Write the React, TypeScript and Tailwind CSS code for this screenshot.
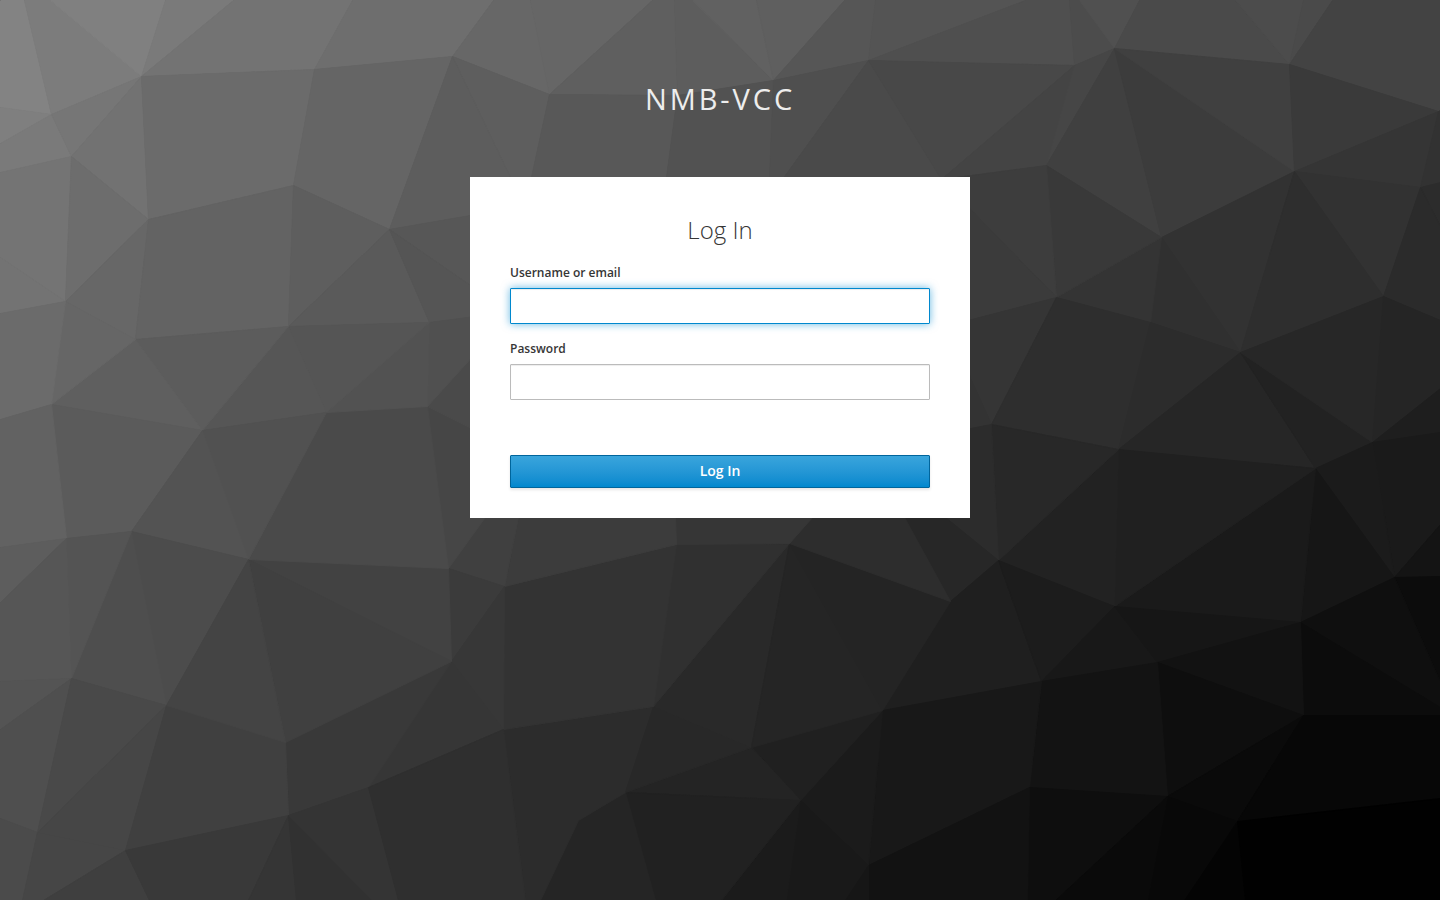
import type { FormEvent } from "react";

/* Low-poly backdrop: each entry is a fill followed by the corners of one facet. */
const facets: [string, string][] = [
  ["#838383", "0,0 24,0 51,114 0,107"],
  ["#7c7c7c", "24,0 50,0 141,76 51,114"],
  ["#808080", "50,0 165,0 141,76"],
  ["#7a7a7a", "165,0 233,0 141,76"],
  ["#737373", "233,0 352,0 314,69 141,76"],
  ["#6e6e6e", "352,0 493,0 452,56 314,69"],
  ["#676767", "493,0 530,0 549,94 452,56"],
  ["#666666", "530,0 652,0 549,94"],
  ["#5f5f5f", "652,0 674,0 677,95 549,94"],
  ["#5d5d5d", "674,0 692,0 773,80 677,95"],
  ["#616161", "692,0 756,0 773,80"],
  ["#5f5f5f", "756,0 844,0 773,80"],
  ["#565656", "844,0 875,0 868,60 773,80"],
  ["#545454", "875,0 1025,0 868,60"],
  ["#4f4f4f", "1025,0 1069,0 1074,65 868,60"],
  ["#4c4c4c", "1069,0 1079,0 1114,48 1074,65"],
  ["#505050", "1079,0 1139,0 1114,48"],
  ["#4a4a4a", "1139,0 1235,0 1289,64 1114,48"],
  ["#4c4c4c", "1235,0 1303,0 1289,64"],
  ["#4a4a4a", "1303,0 1332,0 1289,64"],
  ["#434343", "1332,0 1440,0 1440,110 1438,111 1289,64"],
  ["#7f7f7f", "0,107 51,114 0,143"],
  ["#7a7a7a", "0,143 51,114 71,156 0,172"],
  ["#767676", "51,114 141,76 71,156"],
  ["#727272", "141,76 148,219 71,156"],
  ["#6b6b6b", "141,76 314,69 293,185 148,219"],
  ["#656565", "314,69 452,56 389,229 293,185"],
  ["#747474", "0,172 71,156 65,301 0,257"],
  ["#737373", "0,257 65,301 0,313"],
  ["#6d6d6d", "71,156 148,219 65,301"],
  ["#676767", "65,301 148,219 135,339"],
  ["#636363", "148,219 293,185 288,326 135,339"],
  ["#5e5e5e", "293,185 389,229 288,326"],
  ["#5a5a5a", "389,229 429,322 288,326"],
  ["#5e5e5e", "452,56 549,94 531,177 510,177"],
  ["#5d5d5d", "452,56 510,177 470,215 389,229"],
  ["#575757", "389,229 470,215 470,285"],
  ["#555555", "389,229 470,285 470,317 429,322"],
  ["#585858", "549,94 677,95 666,177 531,177"],
  ["#525252", "677,95 773,80 769,177 666,177"],
  ["#4f4f4f", "773,80 868,60 782,179 769,179"],
  ["#4a4a4a", "868,60 941,179 782,179"],
  ["#484848", "868,60 1074,65 941,179"],
  ["#444444", "1074,65 1046,165 941,179"],
  ["#464646", "1074,65 1114,48 1046,165"],
  ["#404040", "1114,48 1161,237 1046,165"],
  ["#3c3c3c", "1114,48 1294,171 1161,237"],
  ["#404040", "1114,48 1289,64 1294,171"],
  ["#3a3a3a", "1289,64 1438,111 1294,171"],
  ["#353535", "1294,171 1438,111 1420,187"],
  ["#323232", "1438,111 1440,110 1440,182 1420,187"],
  ["#2c2c2c", "1420,187 1440,182 1440,226"],
  ["#323232", "1294,171 1420,187 1383,296"],
  ["#2b2b2b", "1420,187 1440,226 1440,320 1383,296"],
  ["#323232", "1294,171 1240,352 1161,237"],
  ["#303030", "1161,237 1240,352 1150,322"],
  ["#343434", "1161,237 1150,322 1056,297"],
  ["#2e2e2e", "1294,171 1383,296 1240,352"],
  ["#393939", "1046,165 1161,237 1056,297"],
  ["#3d3d3d", "941,179 1046,165 1056,297"],
  ["#3b3b3b", "941,179 1056,297 960,322"],
  ["#353535", "960,322 1056,297 991,424 970,378"],
  ["#333333", "960,356 970,378 991,424 960,430"],
  ["#2e2e2e", "1056,297 1150,322 1118,449 991,424"],
  ["#2c2c2c", "1150,322 1240,352 1118,449"],
  ["#262626", "1240,352 1315,468 1118,449"],
  ["#222222", "1240,352 1372,442 1315,468"],
  ["#272727", "1240,352 1383,296 1372,442"],
  ["#252525", "1383,296 1440,320 1440,388 1372,442"],
  ["#1e1e1e", "1372,442 1440,388 1440,432"],
  ["#1a1a1a", "1372,442 1440,432 1440,524 1394,577"],
  ["#1b1b1b", "1372,442 1394,577 1315,468"],
  ["#161616", "1315,468 1394,577 1300,622"],
  ["#1a1a1a", "1315,468 1300,622 1114,606"],
  ["#202020", "1118,449 1315,468 1114,606"],
  ["#222222", "1118,449 1114,606 998,560"],
  ["#282828", "991,424 1118,449 998,560"],
  ["#2c2c2c", "960,430 991,424 998,560 945,518"],
  ["#272727", "998,560 950,601 904,517 945,517"],
  ["#1f1f1f", "998,560 1041,681 882,710 950,601"],
  ["#1c1c1c", "998,560 1114,606 1041,681"],
  ["#181818", "1114,606 1157,662 1041,681"],
  ["#161616", "1114,606 1300,622 1157,662"],
  ["#141414", "1394,577 1440,524 1440,576"],
  ["#0c0c0c", "1394,577 1440,576 1440,682"],
  ["#0f0f0f", "1300,622 1394,577 1440,682 1440,707"],
  ["#0c0c0c", "1300,622 1440,707 1440,715 1303,715"],
  ["#121212", "1300,622 1303,715 1157,662"],
  ["#0e0e0e", "1157,662 1303,715 1167,796"],
  ["#131313", "1041,681 1157,662 1167,796 1029,787"],
  ["#181818", "882,710 1041,681 1029,787 868,865"],
  ["#0e0e0e", "1029,787 1167,796 1055,900 1027,900"],
  ["#121212", "868,865 1029,787 1027,900 868,900"],
  ["#0a0a0a", "1303,715 1237,821 1167,796"],
  ["#070707", "1303,715 1440,715 1440,798 1237,821"],
  ["#080808", "1167,796 1237,821 1184,900 1147,900"],
  ["#0a0a0a", "1167,796 1147,900 1055,900"],
  ["#040404", "1237,821 1245,900 1184,900"],
  ["#010101", "1237,821 1440,798 1440,900 1245,900"],
  ["#1b1b1b", "882,710 868,865 800,800"],
  ["#202020", "882,710 800,800 751,747"],
  ["#191919", "800,800 868,865 845,900 786,900"],
  ["#1b1b1b", "800,800 786,900 721,900"],
  ["#161616", "868,865 868,900 845,900"],
  ["#242424", "751,747 800,800 625,792"],
  ["#212121", "625,792 800,800 721,900 655,900"],
  ["#252525", "625,792 655,900 540,900 578,820"],
  ["#2c2c2c", "503,729 653,706 625,792 578,820 540,900 525,900"],
  ["#282828", "653,706 751,747 625,792"],
  ["#292929", "653,706 789,543 751,747"],
  ["#252525", "789,543 882,710 751,747"],
  ["#242424", "789,543 950,601 882,710"],
  ["#303030", "676,544 789,543 653,706"],
  ["#333333", "504,586 676,544 653,706 503,729"],
  ["#2d2d2d", "789,543 812,517 904,517 950,601"],
  ["#363636", "676,544 675,517 812,517 789,543"],
  ["#3c3c3c", "504,586 518,517 675,517 676,544"],
  ["#404040", "448,568 484,517 518,517 504,586"],
  ["#3b3b3b", "448,568 504,586 451,661"],
  ["#373737", "504,586 503,729 451,661"],
  ["#363636", "451,661 503,729 368,787"],
  ["#393939", "285,742 451,661 368,787 288,815"],
  ["#424242", "248,559 448,568 451,661"],
  ["#404040", "248,559 451,661 285,742"],
  ["#464646", "427,406 475,430 484,518 448,568"],
  ["#4a4a4a", "326,412 427,406 448,568 248,559"],
  ["#4a4a4a", "427,406 475,353 475,430"],
  ["#505050", "429,322 475,316 475,353 427,406"],
  ["#525252", "429,322 427,406 326,412"],
  ["#555555", "288,326 429,322 326,412"],
  ["#565656", "288,326 326,412 202,430"],
  ["#5c5c5c", "135,339 288,326 202,430"],
  ["#5f5f5f", "51,404 135,339 202,430"],
  ["#5b5b5b", "51,404 202,430 131,531 66,538"],
  ["#666666", "65,301 135,339 51,404"],
  ["#6b6b6b", "0,313 65,301 51,404 0,419"],
  ["#626262", "0,419 51,404 66,538 0,547"],
  ["#5d5d5d", "0,547 66,538 0,602"],
  ["#515151", "202,430 326,412 248,559"],
  ["#535353", "202,430 248,559 131,531"],
  ["#4c4c4c", "131,531 248,559 166,705"],
  ["#4e4e4e", "131,531 166,705 71,678"],
  ["#545454", "66,538 131,531 71,678"],
  ["#565656", "0,602 66,538 71,678 0,681"],
  ["#545454", "0,681 71,678 0,729"],
  ["#4f4f4f", "0,729 71,678 37,832 0,818"],
  ["#494949", "71,678 166,705 37,832"],
  ["#464646", "166,705 125,850 37,832"],
  ["#404040", "166,705 285,742 288,815 125,850"],
  ["#444444", "248,559 285,742 166,705"],
  ["#4b4b4b", "0,818 37,832 22,900 0,900"],
  ["#464646", "37,832 125,850 43,900 22,900"],
  ["#3f3f3f", "125,850 149,900 43,900"],
  ["#393939", "125,850 288,815 248,900 149,900"],
  ["#353535", "288,815 296,900 248,900"],
  ["#313131", "288,815 372,900 296,900"],
  ["#343434", "288,815 368,787 398,900 372,900"],
  ["#2f2f2f", "368,787 503,729 525,900 398,900"],
];

function Backdrop() {
  return (
    <svg
      aria-hidden="true"
      className="absolute inset-0 -z-10 h-full w-full"
      viewBox="0 0 1440 900"
      preserveAspectRatio="xMidYMid slice"
    >
      <g transform="translate(0.5 0.5)">
        {facets.map(([fill, points]) => (
          <polygon key={points} points={points} fill={fill} stroke={fill} strokeWidth="1" />
        ))}
      </g>
    </svg>
  );
}

function Field({ id, label, type, focused = false }: { id: string; label: string; type: string; focused?: boolean }) {
  return (
    <div>
      <label htmlFor={id} className="mb-[5px] block text-xs leading-5 font-semibold text-[#363636]">
        {label}
      </label>
      <input
        id={id}
        name={id}
        type={type}
        autoFocus={focused}
        autoComplete="off"
        className="block h-9 w-full rounded-[1px] border border-[#bbb] bg-white px-2 text-sm text-[#363636] caret-transparent shadow-[inset_0_1px_1px_rgba(3,3,3,0.075)] outline-none focus:border-[#0088ce] focus:shadow-[inset_0_1px_1px_rgba(3,3,3,0.075),0_0_8px_rgba(0,136,206,0.6)]"
      />
    </div>
  );
}

export default function App() {
  const submit = (event: FormEvent) => event.preventDefault();

  return (
    <div className="relative isolate flex min-h-screen flex-col items-center overflow-hidden bg-[#393939] font-['Open_Sans',sans-serif]">
      <Backdrop />
      <header className="px-3 pt-[79px] pb-[58px] text-center text-[29px] leading-10 tracking-widest text-[#ededed] uppercase">
        nmb-vcc
      </header>
      <main className="w-full max-w-[500px] bg-white px-10 pt-10 pb-[30px]">
        <h1 className="mb-5 text-center text-2xl leading-[26px] font-light text-[#363636]">Log In</h1>
        <form onSubmit={submit} className="flex flex-col gap-[15px]">
          <Field id="username" label="Username or email" type="text" focused />
          <Field id="password" label="Password" type="password" />
          <button
            type="submit"
            className="mt-10 h-[33px] w-full rounded-[1px] border border-[#00659c] bg-linear-to-b from-[#39a5dc] to-[#0088ce] pb-0.5 text-sm leading-5 font-semibold text-white shadow-[0_2px_3px_rgba(3,3,3,0.1)]"
          >
            Log In
          </button>
        </form>
      </main>
    </div>
  );
}
